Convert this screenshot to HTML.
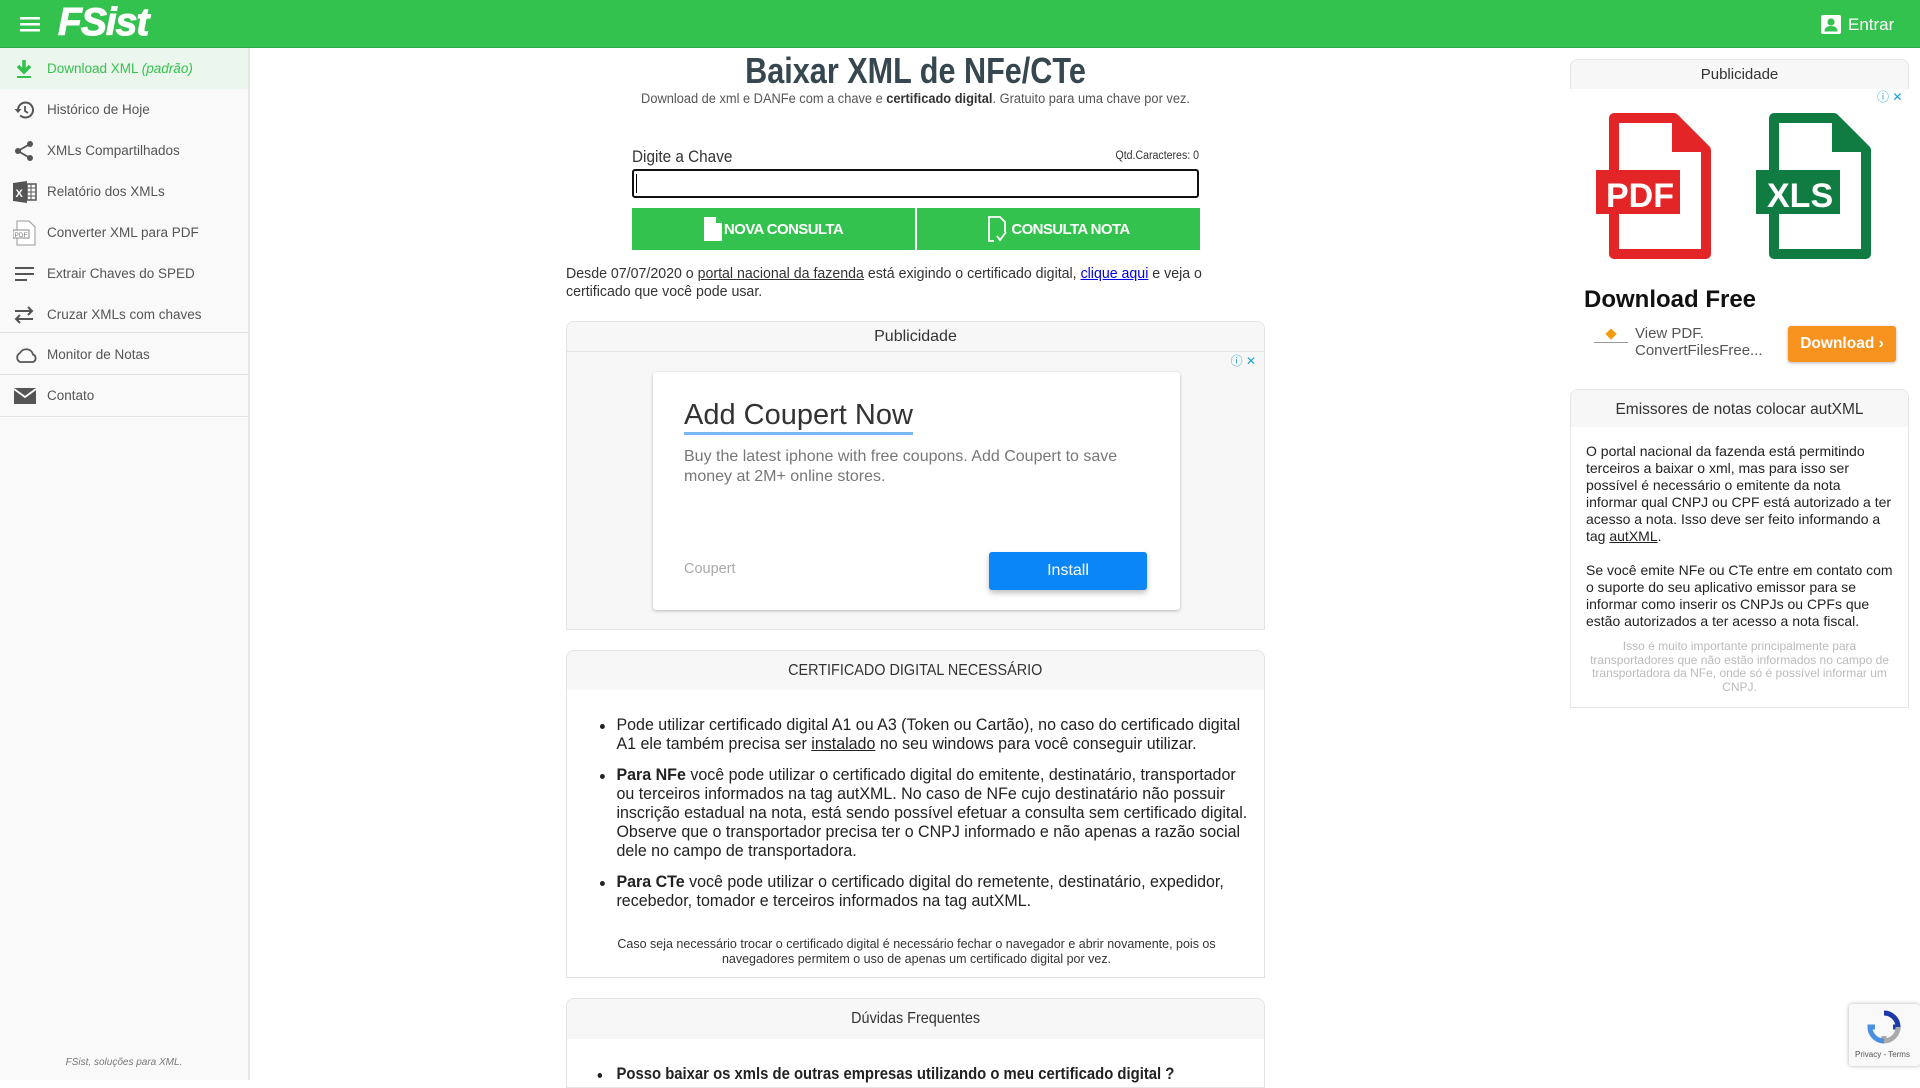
<!DOCTYPE html>
<html><head><meta charset="utf-8"><style>
*{box-sizing:border-box;margin:0;padding:0}
body{width:1920px;height:1080px;overflow:hidden;background:#fff;font-family:"Liberation Sans",sans-serif;color:#333;position:relative}
.a{position:absolute}
.hdr{left:0;top:0;width:1920px;height:48px;background:#34c24f;border-bottom:1px solid #2aa843}
.side{left:0;top:48px;width:250px;height:1032px;background:#f9f9f9;border-right:2px solid #e6e6e6}
.it{position:absolute;left:0;width:248px;height:41px;font-size:13.5px;color:#555;display:flex;align-items:center}
.it svg{position:absolute;left:13px}
.it span{position:absolute;left:47px}
.box{position:absolute;left:566px;width:699px;border:1px solid #e3e3e3;border-radius:8px 8px 0 0;overflow:hidden}
.bh{background:#f7f7f7;text-align:center;color:#333}
ul{list-style:none}
li{position:relative;padding-left:50px;margin-bottom:12px;white-space:nowrap}
li:before{content:"";position:absolute;left:34px;top:8px;width:5px;height:5px;border-radius:50%;background:#222}
</style></head><body>
<div class="a hdr">
 <svg class="a" style="left:20px;top:17px" width="20" height="15"><rect y="0" width="20" height="2.5" fill="#fff"/><rect y="6" width="20" height="2.5" fill="#fff"/><rect y="12" width="20" height="2.5" fill="#fff"/></svg>
 <div class="a" style="left:58px;top:1px;font-size:39px;font-weight:bold;font-style:italic;color:#fff;letter-spacing:-1px;-webkit-text-stroke:1px #fff">FSist</div>
 <svg class="a" style="left:1821px;top:15px" width="20" height="19"><rect width="20" height="19" rx="2" fill="#fff"/><circle cx="10" cy="7" r="3.6" fill="#34c24f"/><path d="M3.5 16.5c0-4 3-5.5 6.5-5.5s6.5 1.5 6.5 5.5z" fill="#34c24f"/></svg>
 <div class="a" style="left:1848px;top:15px;font-size:17px;color:#fff">Entrar</div>
</div>
<div class="a side">
 <div class="it" style="top:0;background:#ebf6ec"><svg width="22" height="22"><path d="M11 2v10M5 8l6 6 6-6" stroke="#34c24f" stroke-width="3.5" fill="none"/><rect x="4" y="18" width="14" height="2" fill="#34c24f"/></svg><span style="color:#34c24f">Download XML <i>(padrão)</i></span></div>
 <div class="it" style="top:41px"><svg width="22" height="22"><path d="M5 11a7.5 7.5 0 1 1 2.2 5.3" stroke="#555" stroke-width="2" fill="none"/><path d="M1.5 10h7l-3.5 4z" fill="#555"/><path d="M12 7v5l3 2" stroke="#555" stroke-width="1.8" fill="none"/></svg><span>Histórico de Hoje</span></div>
 <div class="it" style="top:82px"><svg width="22" height="22"><circle cx="17" cy="4" r="3" fill="#555"/><circle cx="5" cy="11" r="3" fill="#555"/><circle cx="17" cy="18" r="3" fill="#555"/><path d="M17 4L5 11l12 7" stroke="#555" stroke-width="1.8" fill="none"/></svg><span>XMLs Compartilhados</span></div>
 <div class="it" style="top:123px"><svg width="24" height="24"><path d="M0 3l14-2v22L0 21z" fill="#555"/><text x="2.5" y="17" font-size="11" font-weight="bold" fill="#fff" font-family="Liberation Sans">X</text><rect x="14" y="4" width="9" height="16" fill="none" stroke="#555" stroke-width="1.5"/><path d="M14 8h9M14 12h9M14 16h9M18 4v16" stroke="#555"/></svg><span>Relatório dos XMLs</span></div>
 <div class="it" style="top:164px"><svg width="24" height="26"><path d="M4 1h12l6 6v18H4z" fill="#fff" stroke="#999"/><rect x="0" y="10" width="16" height="8" fill="#fff" stroke="#888"/><text x="1.5" y="17" font-size="6.5" fill="#777" font-family="Liberation Sans">PDF</text></svg><span>Converter XML para PDF</span></div>
 <div class="it" style="top:205px"><svg width="22" height="22"><path d="M2 5h19M2 11h19M2 17h12" stroke="#555" stroke-width="2"/></svg><span>Extrair Chaves do SPED</span></div>
 <div class="it" style="top:246px"><svg width="22" height="22"><path d="M2 7h17M15 3l4 4-4 4M20 15H3M7 11l-4 4 4 4" stroke="#555" stroke-width="2" fill="none"/></svg><span>Cruzar XMLs com chaves</span></div>
 <div class="a" style="top:284px;left:0;width:248px;border-top:1px solid #e2e2e2"></div>
 <div class="it" style="top:286px"><svg width="26" height="22"><path d="M7 18a5 5 0 0 1 0-9a7 7 0 0 1 13 1.5a4 4 0 0 1 0 7.5z" stroke="#555" stroke-width="1.8" fill="none"/></svg><span>Monitor de Notas</span></div>
 <div class="a" style="top:326px;left:0;width:248px;border-top:1px solid #e2e2e2"></div>
 <div class="it" style="top:327px"><svg width="24" height="20"><rect x="1" y="2" width="22" height="16" fill="#555"/><path d="M1 3l11 8 11-8" stroke="#fff" stroke-width="1.8" fill="none"/></svg><span>Contato</span></div>
 <div class="a" style="top:368px;left:0;width:248px;border-top:1px solid #e2e2e2"></div>
 <div class="a" style="top:1009px;left:0;width:248px;text-align:center;font-size:10px;font-style:italic;color:#777">FSist, soluções para XML.</div>
</div>

<div class="a" style="left:466px;width:899px;top:50px;text-align:center;font-size:36px;font-weight:bold;color:#37474f;transform:scaleX(0.85)">Baixar XML de NFe/CTe</div>
<div class="a" style="left:516px;width:799px;top:91px;text-align:center;font-size:13.5px;color:#555;transform:scaleX(0.95)">Download de xml e DANFe com a chave e <b style="color:#333">certificado digital</b>. Gratuito para uma chave por vez.</div>
<div class="a" style="left:632px;top:147px;font-size:17px;color:#333;transform:scaleX(0.9);transform-origin:left">Digite a Chave</div>
<div class="a" style="left:1080px;top:150px;width:119px;text-align:right;font-size:11.5px;color:#333;transform:scaleX(0.92);transform-origin:right">Qtd.Caracteres: 0</div>
<div class="a" style="left:632px;top:169px;width:567px;height:29px;border:2px solid #111;border-radius:3px"><div class="a" style="left:2px;top:3px;width:1px;height:19px;background:#000"></div></div>
<div class="a" style="left:632px;top:208px;width:283px;height:42px;background:#34c24f;color:#fff;font-weight:bold;font-size:15px;display:flex;align-items:center;justify-content:center;letter-spacing:-0.6px"><svg width="18" height="24" style="margin-right:2px"><path d="M0 0h12l6 6v18H0z" fill="#fff"/><path d="M12 0v6h6" fill="#34c24f"/></svg>NOVA CONSULTA</div>
<div class="a" style="left:917px;top:208px;width:283px;height:42px;background:#34c24f;color:#fff;font-weight:bold;font-size:15px;display:flex;align-items:center;justify-content:center;letter-spacing:-0.6px"><svg width="24" height="26"><path d="M7 25H2V1h11l5 5v10" stroke="#fff" stroke-width="1.8" fill="none"/><path d="M10 20l3 4 6-8" stroke="#fff" stroke-width="1.8" fill="none"/></svg>CONSULTA NOTA</div>
<div class="a" style="left:566px;top:265px;width:800px;font-size:14.7px;line-height:18px;color:#333;white-space:nowrap;transform:scaleX(0.965);transform-origin:left">Desde 07/07/2020 o <u>portal nacional da fazenda</u> está exigindo o certificado digital, <u style="color:#00e">clique aqui</u> e veja o<br>certificado que você pode usar.</div>

<div class="box" style="top:321px;height:309px;background:#f7f7f7">
 <div class="bh" style="height:30px;line-height:30px;font-size:16px;border-bottom:1px solid #e3e3e3">Publicidade</div>
 <div class="a" style="right:8px;top:30px;font-size:12px;color:#1ea0d8">ⓘ ✕</div>
 <div class="a" style="left:86px;top:50px;width:527px;height:238px;background:#fff;border-radius:3px;box-shadow:0 1px 3px rgba(0,0,0,.25)">
  <div class="a" style="left:31px;top:26px;font-size:29px;color:#333;border-bottom:3px solid #79b8f5;line-height:34px">Add Coupert Now</div>
  <div class="a" style="left:31px;top:75px;width:470px;font-size:16px;line-height:20px;color:#777">Buy the latest iphone with free coupons. Add Coupert to save money at 2M+ online stores.</div>
  <div class="a" style="left:31px;top:189px;font-size:14.5px;color:#aaa">Coupert</div>
  <div class="a" style="left:336px;top:180px;width:158px;height:38px;background:#0a86f7;border-radius:3px;color:#fff;font-size:16px;text-align:center;line-height:38px;box-shadow:0 3px 6px rgba(0,0,0,.25)">Install</div>
 </div>
</div>

<div class="box" style="top:650px;height:328px">
 <div class="bh" style="height:39px;line-height:40px;font-size:16px"><span style="display:inline-block;transform:scaleX(0.9)">CERTIFICADO DIGITAL NECESSÁRIO</span></div>
 <ul style="margin-top:26px;font-size:16.5px;line-height:19px;color:#222;width:800px;transform:scaleX(0.97);transform-origin:left top">
  <li style="padding-left:51px">Pode utilizar certificado digital A1 ou A3 (Token ou Cartão), no caso do certificado digital<br>A1 ele também precisa ser <u>instalado</u> no seu windows para você conseguir utilizar.</li>
  <li style="padding-left:51px"><b>Para NFe</b> você pode utilizar o certificado digital do emitente, destinatário, transportador<br>ou terceiros informados na tag autXML. No caso de NFe cujo destinatário não possuir<br>inscrição estadual na nota, está sendo possível efetuar a consulta sem certificado digital.<br>Observe que o transportador precisa ter o CNPJ informado e não apenas a razão social<br>dele no campo de transportadora.</li>
  <li style="padding-left:51px"><b>Para CTe</b> você pode utilizar o certificado digital do remetente, destinatário, expedidor,<br>recebedor, tomador e terceiros informados na tag autXML.</li>
 </ul>
 <div class="a" style="left:0;width:699px;top:286px;text-align:center;font-size:12.5px;line-height:15px;color:#333;white-space:nowrap">Caso seja necessário trocar o certificado digital é necessário fechar o navegador e abrir novamente, pois os<br>navegadores permitem o uso de apenas um certificado digital por vez.</div>
</div>

<div class="box" style="top:998px;height:90px">
 <div class="bh" style="height:40px;line-height:40px;font-size:16px"><span style="display:inline-block;transform:scaleX(0.9)">Dúvidas Frequentes</span></div>
 <ul style="margin-top:26px;font-size:16.5px;line-height:19px;color:#222;width:800px;transform:scaleX(0.9);transform-origin:left top"><li style="padding-left:55px"><b>Posso baixar os xmls de outras empresas utilizando o meu certificado digital ?</b></li></ul>
</div>

<div class="a" style="left:1570px;top:59px;width:339px;height:30px;border:1px solid #e6e6e6;border-bottom:none;border-radius:8px 8px 0 0;background:#f7f7f7;text-align:center;line-height:30px;font-size:15px;color:#333">Publicidade</div>
<div class="a" style="left:1877px;top:88px;font-size:12px;color:#1ea0d8">ⓘ ✕</div>
<svg class="a" style="left:1594px;top:110px" width="132" height="152"><path d="M20 8h60l32 32v104H20z" fill="none" stroke="#e42527" stroke-width="10" stroke-linejoin="round"/><path d="M78 6v36h36z" fill="#e42527"/><rect x="2" y="60" width="84" height="44" fill="#e42527"/><text x="12" y="97" font-size="34" font-weight="bold" fill="#fff" font-family="Liberation Sans">PDF</text></svg>
<svg class="a" style="left:1754px;top:110px" width="132" height="152"><path d="M20 8h60l32 32v104H20z" fill="none" stroke="#107c41" stroke-width="10" stroke-linejoin="round"/><path d="M78 6v36h36z" fill="#107c41"/><rect x="2" y="60" width="84" height="44" fill="#107c41"/><text x="13" y="97" font-size="34" font-weight="bold" fill="#fff" font-family="Liberation Sans">XLS</text></svg>
<div class="a" style="left:1584px;top:286px;font-size:24px;font-weight:bold;color:#111">Download Free</div>
<div class="a" style="left:1594px;top:330px;width:34px;height:18px"><div style="margin:0 auto;width:8px;height:8px;background:#f39c12;transform:rotate(45deg)"></div><div style="height:1px;background:#999;margin-top:4px"></div></div>
<div class="a" style="left:1635px;top:325px;font-size:15px;line-height:17px;color:#555">View PDF.<br>ConvertFilesFree...</div>
<div class="a" style="left:1788px;top:326px;width:108px;height:36px;background:#f7931e;border-radius:3px;color:#fff;font-size:15.5px;font-weight:bold;line-height:36px;text-align:center;box-shadow:0 1px 3px rgba(0,0,0,.3)">Download ›</div>

<div class="a" style="left:1570px;top:389px;width:339px;height:319px;border:1px solid #e6e6e6;border-radius:8px 8px 0 0;overflow:hidden">
 <div style="height:37px;background:#f7f7f7;text-align:center;line-height:40px;font-size:15.5px;color:#333">Emissores de notas colocar autXML</div>
 <div style="padding:16px 15px 0 15px;font-size:14px;line-height:17px;color:#222">O portal nacional da fazenda está permitindo terceiros a baixar o xml, mas para isso ser possível é necessário o emitente da nota informar qual CNPJ ou CPF está autorizado a ter acesso a nota. Isso deve ser feito informando a tag <u>autXML</u>.<br><br>Se você emite NFe ou CTe entre em contato com o suporte do seu aplicativo emissor para se informar como inserir os CNPJs ou CPFs que estão autorizados a ter acesso a nota fiscal.</div>
 <div style="padding-top:10px;text-align:center;font-size:12px;line-height:13.5px;color:#bbb;white-space:nowrap">Isso é muito importante principalmente para<br>transportadores que não estão informados no campo de<br>transportadora da NFe, onde só é possível informar um<br>CNPJ.</div>
</div>

<div class="a" style="left:1849px;top:1004px;width:71px;height:62px;background:#f9f9f9;box-shadow:0 0 4px rgba(0,0,0,.3);border-radius:3px">
 <svg class="a" style="left:18px;top:6px" width="34" height="34"><path d="M17 3a14 14 0 0 1 14 14h-5" stroke="#1c3aa9" stroke-width="5" fill="none"/><path d="M31 17a14 14 0 0 1-14 14v-5" stroke="#aaa" stroke-width="5" fill="none"/><path d="M17 31A14 14 0 0 1 3 17h5" stroke="#4a90e2" stroke-width="5" fill="none"/></svg>
 <div class="a" style="left:6px;top:46px;font-size:8px;color:#555">Privacy - Terms</div>
</div>
</body></html>
